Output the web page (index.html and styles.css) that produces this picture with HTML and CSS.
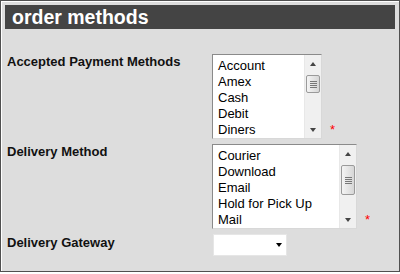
FILE: index.html
```html
<!DOCTYPE html>
<html lang="en">
<head>
    <meta charset="UTF-8">
    <title>Order Methods</title>
    <link rel="stylesheet" href="styles.css">
</head>
<body>
    <div class="panel">
        <div class="panel-title">order methods</div>

        <div class="form">
            <!-- Payment methods -->
            <div class="label">Accepted Payment Methods</div>
            <div class="control">
                <div class="listbox payment">
                    <div class="items">
                        <div class="item">Account</div>
                        <div class="item">Amex</div>
                        <div class="item">Cash</div>
                        <div class="item">Debit</div>
                        <div class="item">Diners</div>
                    </div>
                    <div class="scrollbar">
                        <div class="scroll-btn"><span class="arrow-up"></span></div>
                        <div class="track"><div class="thumb short"><span class="grip"></span></div></div>
                        <div class="scroll-btn"><span class="arrow-down"></span></div>
                    </div>
                </div>
                <span class="required">*</span>
            </div>

            <!-- Delivery methods -->
            <div class="label">Delivery Method</div>
            <div class="control">
                <div class="listbox delivery">
                    <div class="items">
                        <div class="item">Courier</div>
                        <div class="item">Download</div>
                        <div class="item">Email</div>
                        <div class="item">Hold for Pick Up</div>
                        <div class="item">Mail</div>
                    </div>
                    <div class="scrollbar">
                        <div class="scroll-btn"><span class="arrow-up"></span></div>
                        <div class="track"><div class="thumb tall"><span class="grip"></span></div></div>
                        <div class="scroll-btn"><span class="arrow-down"></span></div>
                    </div>
                </div>
                <span class="required">*</span>
            </div>

            <!-- Gateway -->
            <div class="label gateway">Delivery Gateway</div>
            <div class="control">
                <div class="dropdown"><span class="arrow-down"></span></div>
            </div>
        </div>
    </div>
</body>
</html>
```

FILE: styles.css
```css
/* Basic reset */
* {
    margin: 0;
    padding: 0;
    box-sizing: border-box;
}

body {
    background: #ffffff;
    font-family: "Liberation Sans", Arial, sans-serif;
}

/* Outer frame */
.panel {
    width: 400px;
    height: 272px;
    padding: 4px;
    border: 1px solid #505050;
    box-shadow: inset 1px 1px 0 #ffffff;
    background: #dddddd;
}

.panel-title {
    height: 24px;
    padding-left: 7px;
    background: #444444;
    color: #ffffff;
    font-size: 19.5px;
    font-weight: bold;
    line-height: 24px;
}

/* Form rows */
.form {
    display: grid;
    grid-template-columns: 205px auto;
    row-gap: 5px;
    margin-top: 25px;
    padding-left: 2px;
}

.label {
    color: #111111;
    font-size: 13px;
    font-weight: bold;
    line-height: 15px;
}

.label.gateway {
    padding-top: 1px;
}

.control {
    display: flex;
    align-items: flex-end;
}

.required {
    margin-left: 8px;
    margin-bottom: 3px;
    color: #ff0000;
    font-size: 13px;
    line-height: 13px;
}

/* List boxes */
.listbox {
    display: flex;
    height: 85px;
    background: #ffffff;
    border: 1px solid;
    border-color: #8a8a8a #d8d8d8 #d8d8d8 #8a8a8a;
}

.listbox.payment {
    width: 110px;
}

.listbox.delivery {
    width: 145px;
}

.items {
    flex: 1;
    padding: 3px 4px 0 5px;
    color: #000000;
    font-size: 13px;
    line-height: 16px;
    white-space: nowrap;
    overflow: hidden;
}

.scrollbar {
    display: flex;
    flex-direction: column;
    width: 17px;
    background: #f0f0f0;
    border-left: 1px solid #e8e8e8;
}

.scroll-btn {
    display: flex;
    align-items: center;
    justify-content: center;
    height: 17px;
}

.track {
    flex: 1;
    padding: 3px 1px 0 1px;
}

.thumb {
    display: flex;
    align-items: center;
    justify-content: center;
    border: 1px solid #9a9a9a;
    border-radius: 2px;
    background: linear-gradient(to right, #f4f4f4, #e2e2e2 60%, #d6d6d6);
}

.thumb.short {
    height: 18px;
}

.thumb.tall {
    height: 30px;
}

.grip {
    width: 7px;
    height: 7px;
    background: repeating-linear-gradient(to bottom, #777777 0 1px, transparent 1px 2px);
}

.arrow-up {
    width: 0;
    height: 0;
    border-left: 3.5px solid transparent;
    border-right: 3.5px solid transparent;
    border-bottom: 4px solid #444444;
}

.arrow-down {
    width: 0;
    height: 0;
    border-left: 3.5px solid transparent;
    border-right: 3.5px solid transparent;
    border-top: 4px solid #444444;
}

/* Drop down */
.dropdown {
    display: flex;
    align-items: center;
    justify-content: flex-end;
    width: 74px;
    height: 22px;
    margin-left: 1px;
    padding-right: 4px;
    background: #ffffff;
    border: 1px solid #e6e6e6;
}

.dropdown .arrow-down {
    border-top-color: #000000;
}
```
